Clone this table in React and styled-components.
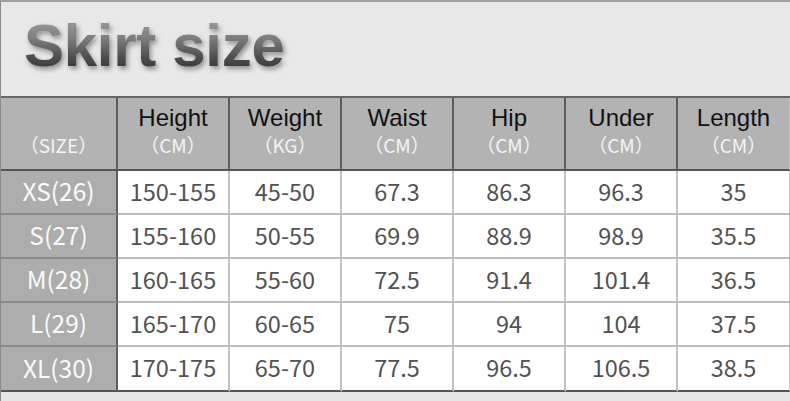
import React from "react";
import styled, { createGlobalStyle } from "styled-components";

const Global = createGlobalStyle`
  html, body { margin: 0; padding: 0; background: #e8e8e8; }
  * { box-sizing: border-box; }
`;

const Page = styled.div`
  width: 790px;
  height: 401px;
  background: #e8e8e8;
  border-top: 2px solid #a0a0a0;
  border-left: 1px solid #8a8a8a;
  overflow: hidden;
`;

const TitleBar = styled.div`
  height: 94px;
  padding: 14px 0 0 23px;
`;

const Title = styled.h1`
  margin: 0;
  display: inline-block;
  font-family: "Liberation Sans", Arial, sans-serif;
  font-weight: 700;
  font-size: 60px;
  line-height: 60px;
  letter-spacing: -0.3px;
  background: linear-gradient(180deg, #a0a0a0 0%, #808080 35%, #4c4c4c 70%, #2e2e2e 100%);
  -webkit-background-clip: text;
  background-clip: text;
  color: transparent;
  filter: drop-shadow(2px 3px 2.5px rgba(0, 0, 0, 0.38));
`;

const Grid = styled.div`
  display: grid;
  grid-template-columns: 117px repeat(6, 112px);
  grid-template-rows: 73px repeat(4, 44px) 45px;
  border-top: 2px solid #666;
`;

const HeadCell = styled.div`
  background: #b3b3b3;
  border-right: ${(p) => (p.$edge ? "1px solid #c4c4c4" : "2px solid #5e5e5e")};
  border-bottom: 2px solid #555;
  display: flex;
  flex-direction: column;
  align-items: center;
  padding-top: 6px;
`;

const HeadName = styled.div`
  font-family: "Liberation Sans", Arial, sans-serif;
  font-size: 24px;
  line-height: 27px;
  height: 27px;
  color: #111;
`;

const HeadUnit = styled.div`
  margin-top: 1px;
  font-family: "Noto Sans CJK SC", "Noto Sans", sans-serif;
  font-size: 19px;
  line-height: 25px;
  color: #f4f4f4;
`;

const SizeCell = styled.div`
  background: #adadad;
  border-right: 2px solid #5e5e5e;
  border-bottom: ${(p) => (p.$bottom ? "2px solid #555" : "2px solid #8c8c8c")};
  display: flex;
  align-items: center;
  justify-content: center;
  padding-bottom: 3px;
  font-family: "Noto Sans CJK SC", "Noto Sans", sans-serif;
  font-size: 24.5px;
  color: #fafafa;
`;

const DataCell = styled.div`
  background: #fff;
  border-right: ${(p) => (p.$edge ? "1px solid #c4c4c4" : "2px solid #c2c2c2")};
  border-bottom: ${(p) => (p.$bottom ? "2px solid #555" : "2px solid #bdbdbd")};
  display: flex;
  align-items: center;
  justify-content: center;
  padding-bottom: 3px;
  font-family: "Noto Sans CJK SC", "Noto Sans", sans-serif;
  font-size: 23.5px;
  color: #525252;
`;

const Footer = styled.div`
  height: 12px;
  background: #e6e6e6;
`;

const headers = [
  ["Height", "（CM）"],
  ["Weight", "（KG）"],
  ["Waist", "（CM）"],
  ["Hip", "（CM）"],
  ["Under", "（CM）"],
  ["Length", "（CM）"],
];

const rows = [
  ["XS(26)", "150-155", "45-50", "67.3", "86.3", "96.3", "35"],
  ["S(27)", "155-160", "50-55", "69.9", "88.9", "98.9", "35.5"],
  ["M(28)", "160-165", "55-60", "72.5", "91.4", "101.4", "36.5"],
  ["L(29)", "165-170", "60-65", "75", "94", "104", "37.5"],
  ["XL(30)", "170-175", "65-70", "77.5", "96.5", "106.5", "38.5"],
];

export default function App() {
  return (
    <>
      <Global />
      <Page>
        <TitleBar>
          <Title>Skirt size</Title>
        </TitleBar>
        <Grid>
          <HeadCell>
            <HeadName />
            <HeadUnit>（SIZE）</HeadUnit>
          </HeadCell>
          {headers.map(([n, u], i) => (
            <HeadCell key={n} $edge={i === headers.length - 1}>
              <HeadName>{n}</HeadName>
              <HeadUnit>{u}</HeadUnit>
            </HeadCell>
          ))}
          {rows.map((r, ri) => {
            const bottom = ri === rows.length - 1;
            return (
              <React.Fragment key={r[0]}>
                <SizeCell $bottom={bottom}>{r[0]}</SizeCell>
                {r.slice(1).map((v, ci) => (
                  <DataCell key={ci} $bottom={bottom} $edge={ci === 5}>
                    {v}
                  </DataCell>
                ))}
              </React.Fragment>
            );
          })}
        </Grid>
        <Footer />
      </Page>
    </>
  );
}
